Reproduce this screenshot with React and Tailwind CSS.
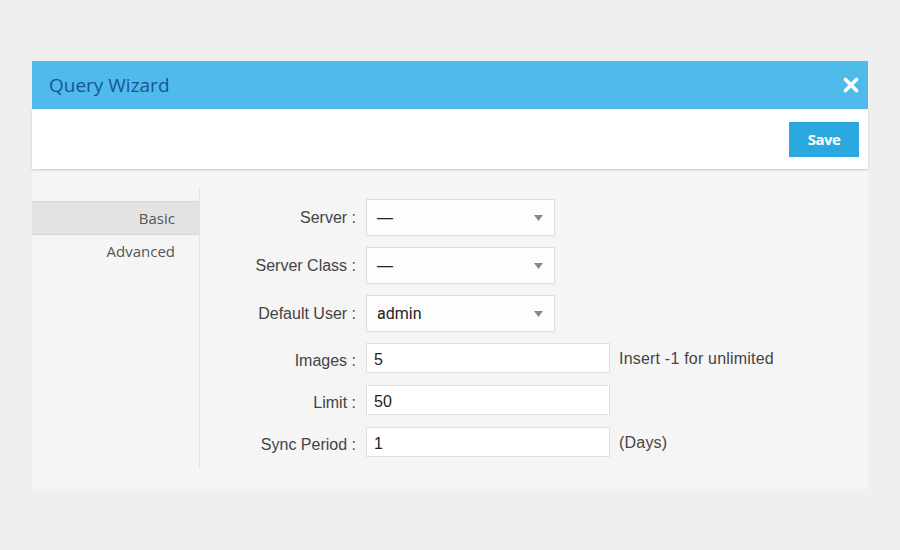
import React from "react";

const sans = { fontFamily: '"Liberation Sans", Arial, sans-serif' };

function SelectBox({ value, mono }) {
  return (
    <div className="w-[189px] h-[37px] bg-[#fdfdfd] border border-[#dcdcdc] flex items-center justify-between pl-[10px] pr-[11px]">
      <span
        className="text-[16px] text-[#222]"
        style={{ fontFamily: mono ? 'Roboto, "Liberation Sans", sans-serif' : '"Liberation Sans", sans-serif' }}
      >
        {value}
      </span>
      <svg width="9" height="6" viewBox="0 0 9 6">
        <path d="M0 0 L9 0 L4.5 6 Z" fill="#8a8a8a" />
      </svg>
    </div>
  );
}

function InputBox({ value }) {
  return (
    <div className="w-[244px] h-[30px] bg-white border border-[#dedede] flex items-center pl-[7px] pt-[3px] text-[16px] text-[#222]" style={sans}>
      {value}
    </div>
  );
}

function Row({ label, children, extra, h, low }) {
  return (
    <div className={`flex items-center ${h}`}>
      <div className={`w-[156px] text-right text-[16px] text-[#444] ${low ? "pt-[5px]" : ""}`} style={sans}>{label}</div>
      <div className="ml-[10px]">{children}</div>
      {extra && <div className={`ml-[9px] text-[16px] text-[#444] tracking-[0.2px] ${low ? "pt-[2px]" : ""}`} style={sans}>{extra}</div>}
    </div>
  );
}

export default function App() {
  return (
    <div className="w-[900px] h-[550px] bg-[#efefef] pt-[61px] pl-[32px]">
      <div className="w-[836px]">
        <div className="h-[48px] bg-[#4fbbeb] flex items-center justify-between pl-[17px] pr-[9px]">
          <span className="text-[19px] text-[#1a5496] leading-none" style={{ fontFamily: '"Open Sans", sans-serif' }}>Query Wizard</span>
          <svg width="16" height="16" viewBox="0 0 16 16">
            <path d="M2.5 2.5 L13.5 13.5 M13.5 2.5 L2.5 13.5" stroke="#fff" strokeWidth="3.6" strokeLinecap="round" />
          </svg>
        </div>
        <div className="h-[60px] bg-white flex items-center justify-end pr-[9px] shadow-[0_1px_2px_rgba(0,0,0,0.18)] relative z-10">
          <button className="w-[70px] h-[35px] bg-[#2ba8e0] text-white text-[15px] font-bold tracking-[-0.5px]" style={{ fontFamily: '"Open Sans", sans-serif' }}>Save</button>
        </div>
        <div className="h-[320px] bg-[#f5f5f5] pt-[18px] flex">
          <div className="w-[168px] h-[281px] border-r border-[#e4e4e4] pt-[14px]">
            <div className="h-[34px] bg-[#e3e3e3] border-y border-[#d6d6d6] flex items-center justify-end pr-[24px] text-[15px] text-[#555]" style={{ fontFamily: '"Open Sans", sans-serif' }}>Basic</div>
            <div className="h-[32px] flex items-center justify-end pr-[24px] text-[15px] text-[#555]" style={{ fontFamily: '"Open Sans", sans-serif' }}>Advanced</div>
          </div>
          <div className="pt-[12px] flex flex-col gap-[11px]">
            <Row label="Server :" h="h-[37px]"><SelectBox value="—" /></Row>
            <Row label="Server Class :" h="h-[37px]"><SelectBox value="—" /></Row>
            <Row label="Default User :" h="h-[37px]"><SelectBox value="admin" mono /></Row>
            <div className="flex flex-col gap-[12px]">
              <Row label="Images :" h="h-[30px]" low extra="Insert -1 for unlimited"><InputBox value="5" /></Row>
              <Row label="Limit :" h="h-[30px]" low><InputBox value="50" /></Row>
              <Row label="Sync Period :" h="h-[30px]" low extra="(Days)"><InputBox value="1" /></Row>
            </div>
          </div>
        </div>
      </div>
    </div>
  );
}
